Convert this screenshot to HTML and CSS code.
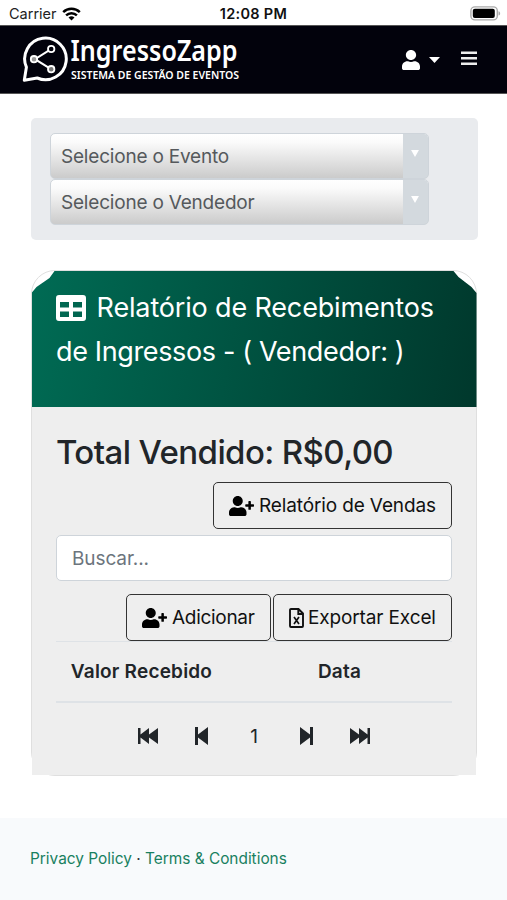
FILE: index.html
```
<!DOCTYPE html>
<html lang="pt-BR">
<head>
    <meta charset="UTF-8">
    <meta name="viewport" content="width=device-width, initial-scale=1.0">
    <title>IngressoZapp</title>
    <link rel="stylesheet" href="styles.css">
</head>
<body>
    <!-- Barra de status -->
    <div class="status-bar">
        <div class="carrier">
            <span>Carrier</span>
            <svg width="19" height="14" viewBox="0 0 19 14" fill="none" stroke="#000" stroke-width="2.5">
                <path d="M1.2 5.1a12 12 0 0 1 16.6 0"/>
                <path d="M4.1 8.3a7.8 7.8 0 0 1 10.8 0"/>
                <path d="M9.5 13.6L6.5 10.6a4.3 4.3 0 0 1 6 0z" fill="#000" stroke="none"/>
            </svg>
        </div>
        <span class="clock">12:08 PM</span>
        <svg class="battery" width="31" height="15" viewBox="0 0 31 15">
            <rect x=".9" y=".9" width="26.4" height="13" rx="4" fill="#fff" stroke="#aaa" stroke-width="1.4"/>
            <rect x="2.8" y="2.8" width="22" height="9.2" rx="2" fill="#000"/>
            <path d="M28.5 5.2c2.2.7 2.2 3.7 0 4.4z" fill="#aaa"/>
        </svg>
    </div>

    <nav class="navbar">
        <svg class="logo" width="220" height="56" viewBox="0 -4 220 56">
            <g fill="none" stroke="#fff" stroke-width="3">
                <path d="M3.3 44.3L5.4 31.2A20.8 20.8 0 1 1 16.2 42z" stroke-linejoin="round"/>
                <path d="M30 13.2L14 23.2l16 10" stroke-width="2"/>
                <circle cx="30.2" cy="13" r="3.2" stroke-width="1.8" fill="#02020c"/>
                <circle cx="13" cy="23.2" r="3.2" stroke-width="1.8" fill="#999"/>
                <circle cx="30.2" cy="33.2" r="3.2" stroke-width="1.8" fill="#777"/>
            </g>
            <text class="logo-name" x="49.5" y="24.5" textLength="167" lengthAdjust="spacingAndGlyphs">IngressoZapp</text>
            <text class="logo-sub" x="50" y="42.5" textLength="168" lengthAdjust="spacingAndGlyphs">SISTEMA DE GESTÃO DE EVENTOS</text>
        </svg>
        <div class="nav-actions">
            <svg width="18" height="20" viewBox="0 0 448 512" fill="#fff" preserveAspectRatio="none"><path d="M224 256c70.700 0 128-57.300 128-128S294.700 0 224 0 96 57.300 96 128s57.300 128 128 128zm89.600 32h-16.700c-22.200 10.200-46.900 16-72.900 16s-50.600-5.800-72.900-16h-16.700C60.200 288 0 348.200 0 422.400V464c0 26.500 21.500 48 48 48h352c26.500 0 48-21.500 48-48v-41.600c0-74.200-60.200-134.400-134.400-134.400z"/></svg>
            <svg class="caret" width="11" height="6" viewBox="0 0 11 6" fill="#fff"><path d="M0 0h11L5.500 6z"/></svg>
            <svg class="bars" width="16" height="15" viewBox="0 0 16 15" fill="#eee"><path d="M0 .5h16V3H0zM0 6h16v2.500H0zM0 11.500h16V14H0z"/></svg>
        </div>
    </nav>

    <main>
        <div class="filters">
            <div class="select">
                <span class="select-text">Selecione o Evento</span>
                <span class="select-arrow"><svg width="8" height="7" viewBox="0 0 9 8" fill="#fff"><path d="M0 0h9L4.500 8z"/></svg></span>
            </div>
            <div class="select">
                <span class="select-text">Selecione o Vendedor</span>
                <span class="select-arrow"><svg width="8" height="7" viewBox="0 0 9 8" fill="#fff"><path d="M0 0h9L4.500 8z"/></svg></span>
            </div>
        </div>

        <div class="card">
            <div class="card-header">
                <svg width="30" height="26" viewBox="0 0 30 26" fill="#fff" fill-rule="evenodd"><path d="M3 0h24a3 3 0 0 1 3 3v20a3 3 0 0 1-3 3H3a3 3 0 0 1-3-3V3a3 3 0 0 1 3-3zM4 7v5.500h9V7zM17 7v5.500h9V7zM4 16.500V22h9v-5.500zM17 16.500V22h9v-5.500z"/></svg>
                <span class="title-1">Relatório de Recebimentos</span><br>
                <span class="title-2">de Ingressos - ( Vendedor: )</span>
            </div>
            <div class="card-body">
                <h2>Total Vendido: R$0,00</h2>
                <div class="btn-row">
                    <button class="btn btn-vendas">
                        <svg width="25" height="20" viewBox="0 0 640 512"><path d="M624 208h-64v-64c0-8.800-7.200-16-16-16h-32c-8.800 0-16 7.200-16 16v64h-64c-8.800 0-16 7.200-16 16v32c0 8.800 7.200 16 16 16h64v64c0 8.800 7.200 16 16 16h32c8.800 0 16-7.200 16-16v-64h64c8.800 0 16-7.200 16-16v-32c0-8.800-7.200-16-16-16zm-400 48c70.700 0 128-57.300 128-128S294.700 0 224 0 96 57.300 96 128s57.300 128 128 128zm89.600 32h-16.700c-22.200 10.200-46.900 16-72.900 16s-50.600-5.800-72.900-16h-16.700C60.200 288 0 348.200 0 422.400V464c0 26.500 21.500 48 48 48h352c26.500 0 48-21.500 48-48v-41.600c0-74.200-60.200-134.400-134.400-134.400z"/></svg>
                        <span>Relatório de Vendas</span>
                    </button>
                </div>
                <input class="search" type="text" placeholder="Buscar...">
                <div class="btn-row">
                    <button class="btn btn-add">
                        <svg width="25" height="20" viewBox="0 0 640 512"><path d="M624 208h-64v-64c0-8.800-7.200-16-16-16h-32c-8.800 0-16 7.200-16 16v64h-64c-8.800 0-16 7.200-16 16v32c0 8.800 7.200 16 16 16h64v64c0 8.800 7.200 16 16 16h32c8.800 0 16-7.200 16-16v-64h64c8.800 0 16-7.200 16-16v-32c0-8.800-7.200-16-16-16zm-400 48c70.700 0 128-57.300 128-128S294.700 0 224 0 96 57.300 96 128s57.300 128 128 128zm89.600 32h-16.700c-22.200 10.200-46.900 16-72.900 16s-50.600-5.800-72.900-16h-16.700C60.200 288 0 348.200 0 422.400V464c0 26.500 21.500 48 48 48h352c26.500 0 48-21.500 48-48v-41.600c0-74.200-60.200-134.400-134.400-134.400z"/></svg>
                        <span>Adicionar</span>
                    </button>
                    <button class="btn btn-excel">
                        <svg width="15" height="20" viewBox="0 0 15 20" fill="none" stroke="#111" stroke-width="1.900"><path d="M2 1h7.500L14 5.500V18a1 1 0 0 1-1 1H2a1 1 0 0 1-1-1V2a1 1 0 0 1 1-1zM9.300 1v5H14"/><path d="M5 9l5 7M10 9l-5 7" stroke-width="1.700"/></svg>
                        <span>Exportar Excel</span>
                    </button>
                </div>
                <table>
                    <thead>
                        <tr>
                            <th>Valor Recebido</th>
                            <th>Data</th>
                        </tr>
                    </thead>
                </table>
                <div class="pagination">
                    <svg width="20" height="16" viewBox="0 0 20 16"><path d="M0 0h2.500v6.500L11 0v6.500L20 0v16l-9-6.500V16L2.500 9.500V16H0z"/></svg>
                    <svg width="13" height="18" viewBox="0 0 13 18"><path d="M0 0h3v7.500L13 0v18L3 10.500V18H0z"/></svg>
                    <span>1</span>
                    <svg width="13" height="18" viewBox="0 0 13 18"><path d="M13 0h-3v7.500L0 0v18l10-7.500V18h3z"/></svg>
                    <svg width="20" height="16" viewBox="0 0 20 16"><path d="M20 0h-2.500v6.500L9 0v6.500L0 0v16l9-6.500V16l8.500-6.500V16H20z"/></svg>
                </div>
            </div>
        </div>
    </main>

    <footer>
        <a href="#">Privacy Policy</a>
        <span>·</span>
        <a href="#">Terms &amp; Conditions</a>
    </footer>
</body>
</html>
```
FILE: styles.css
```
* {
    box-sizing: border-box;
}

body {
    margin: 0;
    background-color: #fff;
    color: #212529;
    font-family: Inter, "Liberation Sans", sans-serif;
    font-size: 19px;
    height: 900px;
    display: flex;
    flex-direction: column;
    overflow: hidden;
}

svg {
    flex: none;
}

.status-bar {
    display: grid;
    grid-template-columns: 1fr auto 1fr;
    align-items: center;
    flex: none;
    height: 25px;
    padding: 2px 6px 0 9px;
    font-size: 14.5px;
    color: #222;
}

.carrier {
    display: flex;
    align-items: center;
    gap: 5px;
}

.clock {
    color: #111;
    font-weight: 600;
    letter-spacing: 0.3px;
    margin-right: 3px;
}

.battery {
    justify-self: end;
}

.navbar {
    display: flex;
    justify-content: space-between;
    align-items: center;
    flex: none;
    height: 69px;
    padding: 0 30px 0 21px;
    background-color: #02020c;
    border-top: 1px solid #555;
    border-bottom: 1px solid #555;
}

.logo text {
    fill: #fff;
    font-family: "Noto Sans", sans-serif;
}

.logo-name {
    font-size: 28.5px;
    font-weight: 600;
}

.logo-sub {
    font-size: 10.5px;
    font-weight: 600;
}

.nav-actions {
    display: flex;
    align-items: center;
}

.caret {
    margin: 1px 21px 0 9px;
}

.bars {
    margin-top: -2px;
}

main {
    flex: none;
    padding: 24px 29px 0 31px;
}

.filters {
    height: 122px;
    padding: 15px 49px 15px 19px;
    background-color: #e9ebee;
    border-radius: 5px;
}

.select {
    display: flex;
    height: 46px;
    border: 1px solid #ced4da;
    border-radius: 5px;
    background: linear-gradient(#fff, #fafafa 20%, #cbcbcb);
    color: #55595c;
    letter-spacing: -0.2px;
    overflow: hidden;
}

.select-text {
    flex: 1;
    padding-left: 10px;
    line-height: 46px;
}

.select-arrow {
    width: 25px;
    padding: 16px 0 0 8px;
    background-color: #d3d9de;
    line-height: 0;
}

.card {
    height: 506px;
    margin: 30px 1px 0 0;
    border: 1px solid #dfdfdf;
    border-radius: 24px;
}

.card-header {
    height: 136px;
    margin: 0 -0.5px;
    padding: 15px 24.5px;
    background: linear-gradient(100deg, #006b54, #00382c);
    clip-path: polygon(0 22px, 5px 16px, 18px 7px, 23px 0, calc(100% - 23px) 0, calc(100% - 18px) 6px, calc(100% - 5px) 16px, 100% 22px, 100% 100%, 0 100%);
    color: #fff;
    font-size: 27px;
    line-height: 44px;
    white-space: nowrap;
}

.card-header svg {
    margin-right: 3px;
    vertical-align: -4px;
}

.title-1 {
    letter-spacing: -0.16px;
}

.title-2 {
    letter-spacing: -0.36px;
}

.card-body {
    height: 368px;
    padding: 25px 24px 0;
    background-color: #eee;
}

h2 {
    margin: 0 0 10px;
    font-size: 33px;
    font-weight: 500;
    line-height: 40px;
    letter-spacing: -0.6px;
    white-space: nowrap;
}

.btn-row {
    display: flex;
    justify-content: flex-end;
    gap: 2px;
}

.btn {
    display: flex;
    align-items: center;
    height: 47px;
    padding: 0 15px;
    gap: 5px;
    background: transparent;
    border: 1.5px solid #333;
    border-radius: 5px;
    color: #111;
    font-family: inherit;
    font-size: 19px;
    letter-spacing: -0.13px;
    white-space: nowrap;
}

.btn-vendas {
    width: 239px;
}

.btn-add {
    width: 145px;
    letter-spacing: -0.3px;
}

.btn-excel {
    width: 179px;
    gap: 4px;
}

.search {
    display: block;
    width: 100%;
    height: 46px;
    margin: 6px 0 13px;
    padding: 1px 15px 0;
    border: 1px solid #ced4da;
    border-radius: 5px;
    background-color: #fff;
    font-family: inherit;
    font-size: 19px;
    letter-spacing: -0.1px;
}

.search::placeholder {
    color: #6c757d;
}

table {
    width: 100%;
    border-collapse: collapse;
    table-layout: fixed;
}

th {
    width: 171px;
    height: 60px;
    padding: 0;
    border-top: 1px solid #dee2e6;
    border-bottom: 2px solid #dee2e6;
    font-weight: 600;
    letter-spacing: 0.2px;
    white-space: nowrap;
}

th:last-child {
    width: auto;
}

.pagination {
    display: grid;
    grid-template-columns: repeat(5, 1fr);
    place-items: center;
    width: 264px;
    height: 67px;
    margin: 0 auto;
    fill: #212529;
}

footer {
    flex: 1;
    margin-top: 42px;
    padding: 29px 30px 0;
    background-color: #f8fafc;
    font-size: 15.4px;
    line-height: 23px;
    color: #333;
}

footer a {
    color: #198060;
    text-decoration: none;
}
```
